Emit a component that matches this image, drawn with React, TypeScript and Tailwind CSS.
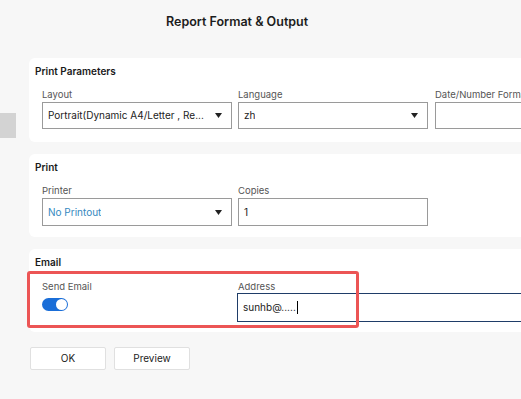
import { ReactNode } from "react";

function Caret() {
    return (
        <svg width="7" height="5" viewBox="0 0 7 5" className="shrink-0">
            <path d="M0 0 H7 L3.5 5 Z" fill="#222" />
        </svg>
    );
}

function Field({ label, children }: { label: string; children: ReactNode }) {
    return (
        <div className="flex w-[190px] shrink-0 flex-col">
            <span className="mb-[1px] whitespace-nowrap text-[9.5px] leading-[12px] text-[#555]">{label}</span>
            {children}
        </div>
    );
}

function Select({ value, blue, h = "h-[27px]" }: { value: string; blue?: boolean; h?: string }) {
    return (
        <div className={`flex ${h} items-center justify-between gap-2 border border-[#9a9a9a] bg-white pl-[5px] pr-[9px]`}>
            <span
                className={`overflow-hidden whitespace-nowrap text-[10px] ${blue ? "text-[#3589c0]" : "text-[#222]"}`}
            >
                {value}
            </span>
            <Caret />
        </div>
    );
}

function Card({ title, children }: { title: string; children: ReactNode }) {
    return (
        <div className="w-[560px] rounded-md bg-white pt-[6px]">
            <div className="pl-[6px] text-[10px] font-semibold leading-[14px] text-[#1a1a1a]">{title}</div>
            {children}
        </div>
    );
}

export default function App() {
    return (
        <div
            className="relative h-[399px] w-[521px] overflow-hidden bg-[#f7f7f7]"
            style={{ fontFamily: "Inter, 'Noto Sans', sans-serif" }}
        >
            <div className="absolute left-0 top-[113px] h-[25px] w-[16px] bg-[#d3d3d3]" />

            <div className="flex h-[58px] items-start pl-[166px] pt-[13px]">
                <h1 className="text-[12.5px] font-semibold leading-[18px] text-[#1c1c1c]">Report Format &amp; Output</h1>
            </div>

            <div className="flex flex-col gap-[12px] pl-[29px]">
                <Card title="Print Parameters">
                    <div className="flex gap-[6px] pb-[13px] pl-[13px] pt-[11px]">
                        <Field label="Layout">
                            <Select value="Portrait(Dynamic A4/Letter , Re..." />
                        </Field>
                        <Field label="Language">
                            <Select value="zh" />
                        </Field>
                        <div className="ml-[1px]">
                            <Field label="Date/Number Format">
                                <div className="h-[27px] border border-[#9a9a9a] bg-white" />
                            </Field>
                        </div>
                    </div>
                </Card>

                <Card title="Print">
                    <div className="flex gap-[6px] pb-[11px] pl-[13px] pt-[11px]">
                        <Field label="Printer">
                            <Select value="No Printout" blue h="h-[28px]" />
                        </Field>
                        <Field label="Copies">
                            <div className="flex h-[28px] items-center border border-[#9a9a9a] bg-white pl-[5px] text-[10px] text-[#222]">
                                1
                            </div>
                        </Field>
                    </div>
                </Card>

                <div className="relative">
                    <Card title="Email">
                        <div className="flex gap-[6px] pb-[10px] pl-[13px] pt-[12px]">
                            <div className="flex w-[190px] shrink-0 flex-col">
                                <span className="text-[9.5px] leading-[12px] text-[#555]">Send Email</span>
                                <div className="mt-[5px] flex h-[13px] w-[26px] items-center justify-end rounded-full bg-[#1a6ed8] pr-[1px]">
                                    <div className="h-[11px] w-[11px] rounded-full bg-white" />
                                </div>
                            </div>
                            <div className="flex flex-1 flex-col">
                                <span className="text-[9.5px] leading-[12px] text-[#555]">Address</span>
                                <div className="-ml-[1px] flex h-[29px] items-center border-[1.5px] border-[#1f3d68] bg-white pl-[5px] text-[10px] text-[#222]">
                                    sunhb@.....
                                    <span className="ml-[1px] h-[13px] w-[1px] bg-black" />
                                </div>
                            </div>
                        </div>
                    </Card>
                    <div className="pointer-events-none absolute left-[-2px] top-[22px] h-[57px] w-[332px] rounded-[3px] border-[3px] border-[#ec5555]" />
                </div>

                <div className="mt-[3px] flex gap-[8px] pl-[1px]">
                    <button className="h-[23px] w-[76px] rounded-[2px] border border-[#e0e0e0] bg-white text-[10px] text-[#222]">OK</button>
                    <button className="h-[23px] w-[76px] rounded-[2px] border border-[#e0e0e0] bg-white text-[10px] text-[#222]">Preview</button>
                </div>
            </div>
        </div>
    );
}
